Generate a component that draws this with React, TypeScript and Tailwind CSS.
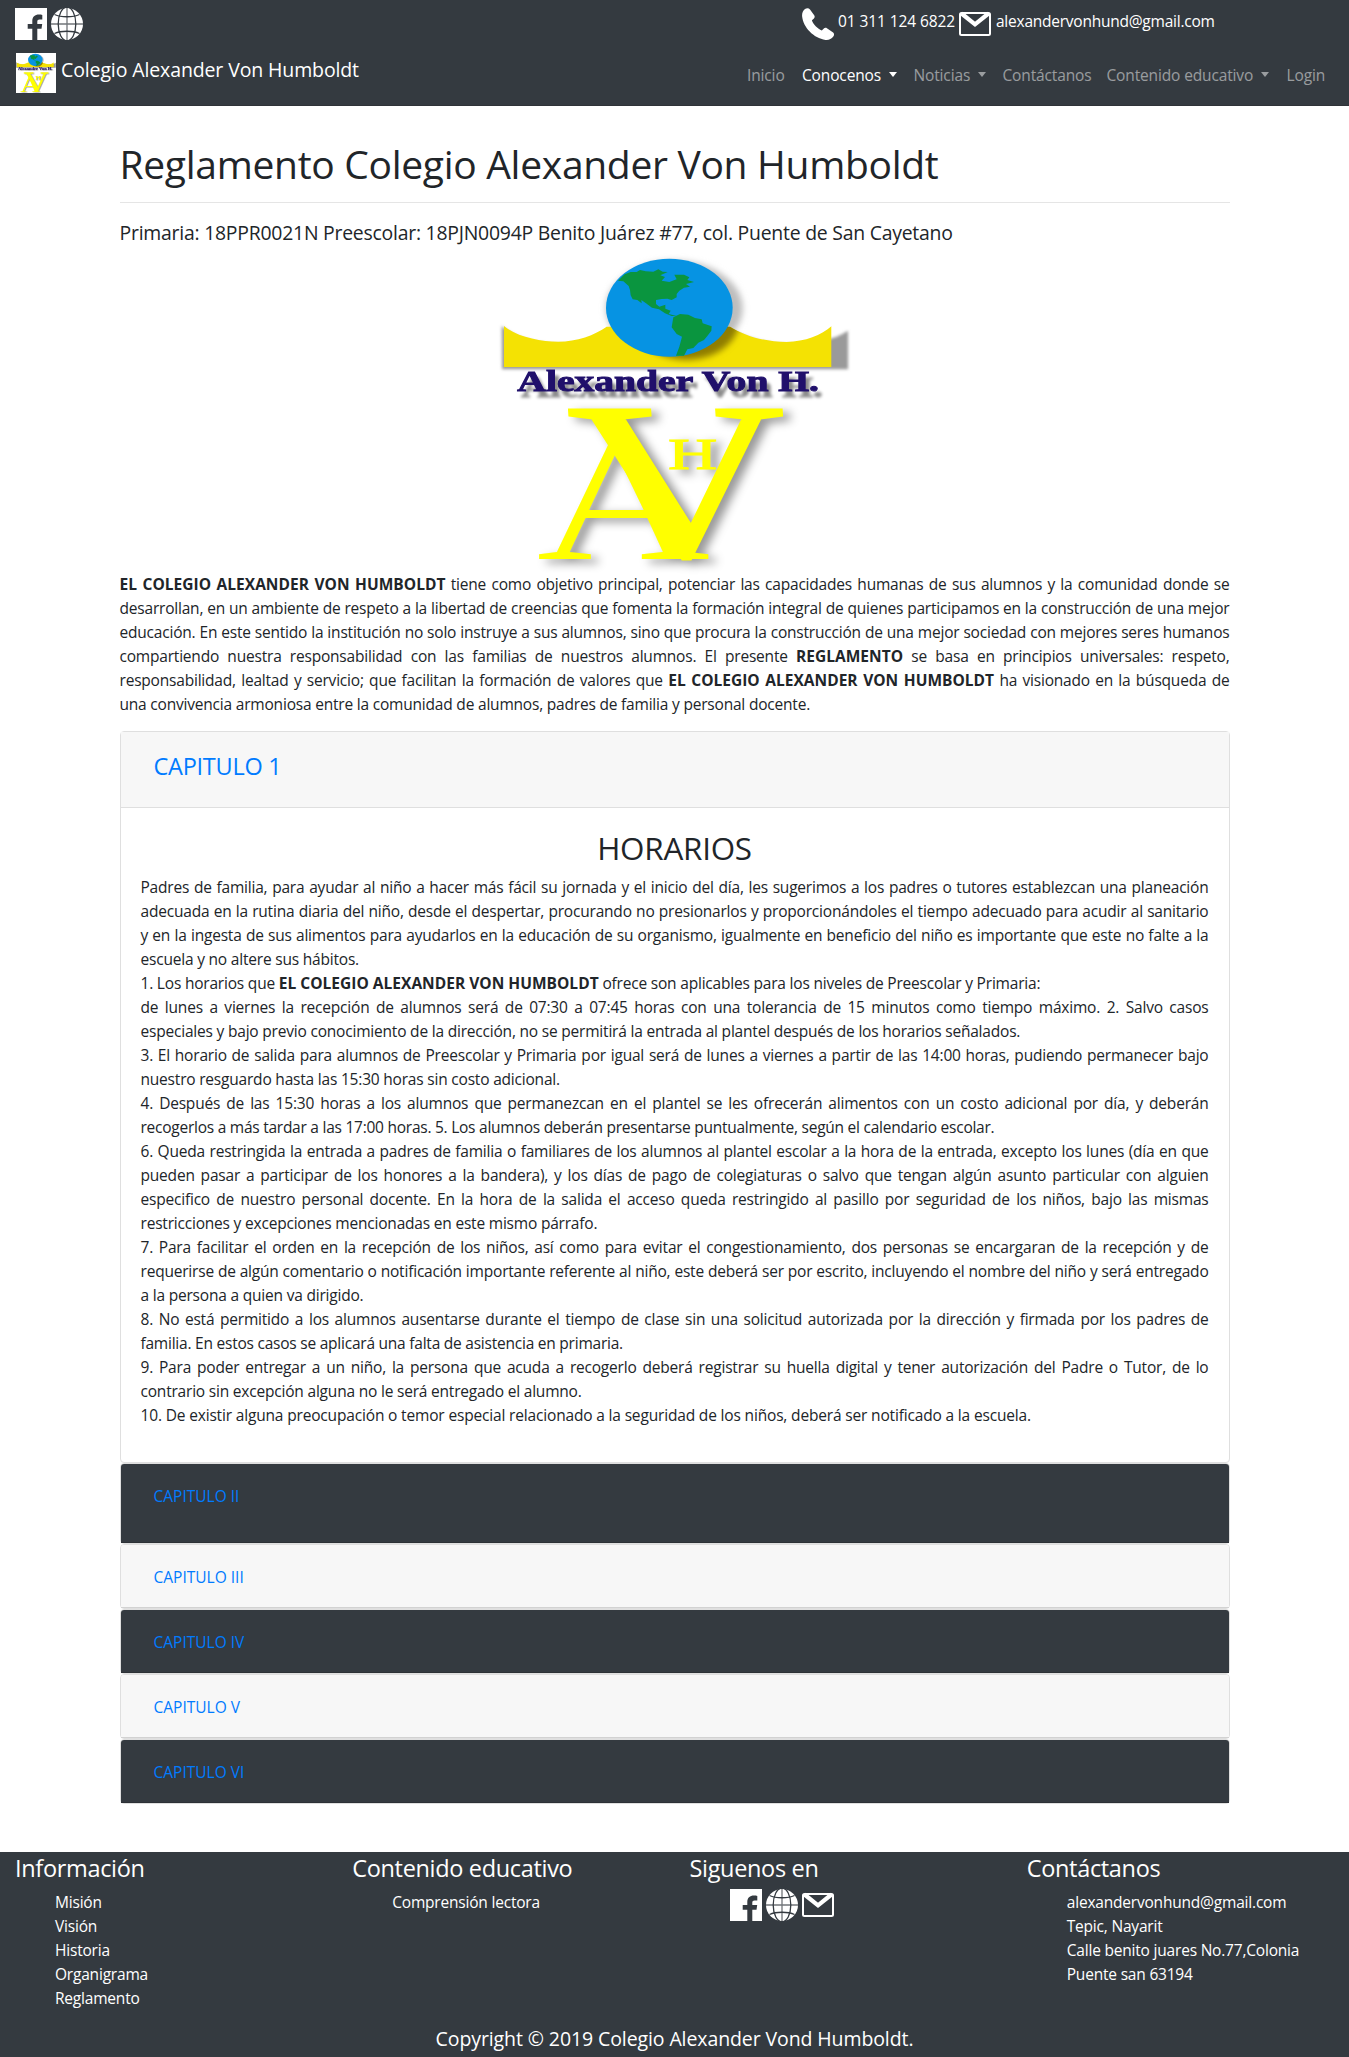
import type { ReactNode } from "react";

function FacebookIcon() {
  return (
    <svg viewBox="0 0 32 32" className="block h-8 w-8 shrink-0">
      <path
        fill="#fff"
        fillRule="evenodd"
        d="M0 0H32V32H22.3V20.7H26.5L27.2 16H22.3V13.6C22.3 12.1 23 11.4 24.6 11.4H27.3V6.9C26.4 6.7 25.2 6.6 24 6.6C19.8 6.6 17.3 8.8 17.3 13V16H12.7V20.7H17.3V32H0Z"
      />
    </svg>
  );
}

function GlobeIcon() {
  return (
    <svg viewBox="0 0 32 32" className="block h-8 w-8 shrink-0">
      <circle cx="16" cy="16" r="16" fill="#fff" />
      <g fill="none" stroke="#343a40" strokeWidth="1.3">
        <ellipse cx="16" cy="16" rx="8.8" ry="17" />
        <path d="M3.5 6.5C10 9.5 22 9.5 28.5 6.5M3.5 25.5C10 22.5 22 22.5 28.5 25.5" />
        <path d="M16 0V32M0 16H32" strokeOpacity=".7" />
      </g>
    </svg>
  );
}

function MailIcon() {
  return (
    <svg viewBox="0 0 32 32" className="block h-8 w-8 shrink-0" fill="none">
      <rect x="1" y="5" width="30" height="22" rx="1.5" stroke="#fff" strokeWidth="2" />
      <path d="M2.500 5.500L16 16.300L29.500 5.500" stroke="#fff" strokeWidth="4.2" />
    </svg>
  );
}

function PhoneIcon() {
  return (
    <svg viewBox="0 0 32 32" className="block h-8 w-8 shrink-0">
      <path
        fill="#fff"
        d="M3 1C4.8-.3 6.8-.1 8 1.4L12.2 7.2C13 8.5 12.8 9.7 11.7 10.7L9.9 12.3C10.9 16.2 15.8 21 19.8 22.5L21.6 20.7C22.5 19.7 23.8 19.5 24.9 20.2L30.8 24.2C32.3 25.3 32.4 27 31.3 28.5C29.5 31 26.8 32.2 23.6 31.9C11.5 30.3 1.2 19.4.1 8.300C-.1 5.300.9 2.500 3 1Z"
      />
    </svg>
  );
}

function Crest({ className, viewBox }: { className: string; viewBox: string }) {
  return (
    <svg viewBox={viewBox} preserveAspectRatio="none" className={className}>
      <defs>
        <filter id="soft" x="-20%" y="-20%" width="150%" height="150%">
          <feGaussianBlur stdDeviation="10" />
        </filter>
        <filter id="tight" x="-20%" y="-20%" width="150%" height="150%">
          <feGaussianBlur stdDeviation="4" />
        </filter>
        <clipPath id="band">
          <path d="M72 258C110 290 180 305 235 305C290 305 345 285 380 260H750C790 285 850 306 920 306C975 305 1025 285 1055 258V382H72Z" />
        </clipPath>
      </defs>
      <path
        d="M65 258C110 298 180 312 250 312C290 312 355 295 390 270H760C800 295 870 314 940 312C1010 309 1060 300 1104 272V388H66Z"
        fill="#9a9a9a"
        filter="url(#tight)"
      />
      <ellipse cx="583" cy="205" rx="205" ry="143" fill="#bdbdbd" filter="url(#soft)" />
      <g clipPath="url(#band)">
        <rect x="72" y="240" width="983" height="142" fill="#f4e203" />
        <ellipse cx="620" cy="235" rx="160" ry="125" fill="#8f7d00" filter="url(#soft)" />
      </g>
      <ellipse cx="568" cy="203" rx="190" ry="147" fill="#0693e3" />
      <g fill="#0a953f">
        <path d="M414 122L434 103L452 96L470 96L480 90L497 94L520 95L535 88L548 95L563 96L541 106L555 111L545 122L568 126L590 118L583 104L612 104L628 112L622 120L642 126L618 132L630 140L612 143L598 152L590 162L590 172L575 180L562 176L545 177L528 180L528 192L538 200L556 194L556 206L572 212L566 222L590 228L575 228L555 220L537 208L516 203L498 190L484 180L485 190L472 180L458 178L452 166L450 150L446 138L430 124Z" />
        <path d="M580 232L600 222L625 224L645 234L665 238L668 250L695 259L694 272L682 288L672 300L655 308L640 324L622 328L612 347L588 347L598 320L606 290L590 282L575 262Z" />
      </g>
      <g fontFamily="Liberation Serif" className="[filter:drop-shadow(12px_18px_4px_rgb(0_0_0/.45))]">
        <text x="112" y="453" fontWeight="700" fontSize="88" letterSpacing="0" textLength="905" lengthAdjust="spacingAndGlyphs" fill="#20106b" stroke="#20106b" strokeWidth="3">
          Alexander Von H.
        </text>
      </g>
      <g fontFamily="Liberation Serif" letterSpacing="0" fill="#ff0" className="[filter:drop-shadow(22px_12px_14px_rgb(0_0_0/.4))]">
        <g transform="translate(258 502) skewX(4)">
          <text x="0" y="446" fontSize="670" stroke="#ff0" strokeWidth="7" textLength="655" lengthAdjust="spacingAndGlyphs">V</text>
        </g>
        <text x="170" y="957" fontSize="540" textLength="520" lengthAdjust="spacingAndGlyphs">A</text>
        <text x="564" y="686" fontSize="132" stroke="#ff0" strokeWidth="3" textLength="148" lengthAdjust="spacingAndGlyphs">H</text>
      </g>
    </svg>
  );
}

function Caret() {
  return <span className="ml-[8px] inline-block border-x-[4.5px] border-t-[5px] border-x-transparent border-t-current align-[4px]" />;
}

const nav: { label: string; width: string; active?: boolean; caret?: boolean }[] = [
  { label: "Inicio", width: "w-[55px]" },
  { label: "Conocenos", width: "w-[111.5px]", active: true, caret: true },
  { label: "Noticias", width: "w-[89px]", caret: true },
  { label: "Contáctanos", width: "w-[104px]" },
  { label: "Contenido educativo", width: "w-[180px]", caret: true },
  { label: "Login", width: "w-[40px]" },
];

/** One typeset line; full lines are stretched to the column's width. */
function Line({ children, end }: { children: ReactNode; end?: boolean }) {
  return (
    <div
      className={
        end
          ? "h-6 whitespace-nowrap text-left"
          : "h-6 whitespace-nowrap text-justify [text-align-last:justify]"
      }
    >
      {children}
    </div>
  );
}

const B = ({ children }: { children: ReactNode }) => <b className="font-bold tracking-[0.02px]">{children}</b>;

const intro: [ReactNode, boolean?][] = [
  [<><B>EL COLEGIO ALEXANDER VON HUMBOLDT</B> tiene como objetivo principal, potenciar las capacidades humanas de sus alumnos y la comunidad donde se</>],
  ["desarrollan, en un ambiente de respeto a la libertad de creencias que fomenta la formación integral de quienes participamos en la construcción de una mejor"],
  ["educación. En este sentido la institución no solo instruye a sus alumnos, sino que procura la construcción de una mejor sociedad con mejores seres humanos"],
  [<>compartiendo nuestra responsabilidad con las familias de nuestros alumnos. El presente <B>REGLAMENTO</B> se basa en principios universales: respeto,</>],
  [<>responsabilidad, lealtad y servicio; que facilitan la formación de valores que <B>EL COLEGIO ALEXANDER VON HUMBOLDT</B> ha visionado en la búsqueda de</>],
  ["una convivencia armoniosa entre la comunidad de alumnos, padres de familia y personal docente.", true],
];

const horarios: [ReactNode, boolean?][] = [
  ["Padres de familia, para ayudar al niño a hacer más fácil su jornada y el inicio del día, les sugerimos a los padres o tutores establezcan una planeación"],
  ["adecuada en la rutina diaria del niño, desde el despertar, procurando no presionarlos y proporcionándoles el tiempo adecuado para acudir al sanitario"],
  ["y en la ingesta de sus alimentos para ayudarlos en la educación de su organismo, igualmente en beneficio del niño es importante que este no falte a la"],
  ["escuela y no altere sus hábitos.", true],
  [<>1. Los horarios que <B>EL COLEGIO ALEXANDER VON HUMBOLDT</B> ofrece son aplicables para los niveles de Preescolar y Primaria:</>, true],
  ["de lunes a viernes la recepción de alumnos será de 07:30 a 07:45 horas con una tolerancia de 15 minutos como tiempo máximo. 2. Salvo casos"],
  ["especiales y bajo previo conocimiento de la dirección, no se permitirá la entrada al plantel después de los horarios señalados.", true],
  ["3. El horario de salida para alumnos de Preescolar y Primaria por igual será de lunes a viernes a partir de las 14:00 horas, pudiendo permanecer bajo"],
  ["nuestro resguardo hasta las 15:30 horas sin costo adicional.", true],
  ["4. Después de las 15:30 horas a los alumnos que permanezcan en el plantel se les ofrecerán alimentos con un costo adicional por día, y deberán"],
  [<span className="tracking-[-0.25px]">recogerlos a más tardar a las 17:00 horas. 5. Los alumnos deberán presentarse puntualmente, según el calendario escolar.</span>, true],
  ["6. Queda restringida la entrada a padres de familia o familiares de los alumnos al plantel escolar a la hora de la entrada, excepto los lunes (día en que"],
  ["pueden pasar a participar de los honores a la bandera), y los días de pago de colegiaturas o salvo que tengan algún asunto particular con alguien"],
  ["especifico de nuestro personal docente. En la hora de la salida el acceso queda restringido al pasillo por seguridad de los niños, bajo las mismas"],
  ["restricciones y excepciones mencionadas en este mismo párrafo.", true],
  ["7. Para facilitar el orden en la recepción de los niños, así como para evitar el congestionamiento, dos personas se encargaran de la recepción y de"],
  ["requerirse de algún comentario o notificación importante referente al niño, este deberá ser por escrito, incluyendo el nombre del niño y será entregado"],
  ["a la persona a quien va dirigido.", true],
  ["8. No está permitido a los alumnos ausentarse durante el tiempo de clase sin una solicitud autorizada por la dirección y firmada por los padres de"],
  [<span className="tracking-[-0.23px]">familia. En estos casos se aplicará una falta de asistencia en primaria.</span>, true],
  ["9. Para poder entregar a un niño, la persona que acuda a recogerlo deberá registrar su huella digital y tener autorización del Padre o Tutor, de lo"],
  ["contrario sin excepción alguna no le será entregado el alumno.", true],
  [<span className="tracking-[-0.165px]">10. De existir alguna preocupación o temor especial relacionado a la seguridad de los niños, deberá ser notificado a la escuela.</span>, true],
];

const chapters = [
  { title: "CAPITULO II", card: "h-[81px]", header: "bg-[#343a40]" },
  { title: "CAPITULO III", card: "h-[65px]", header: "bg-[#f7f7f7]" },
  { title: "CAPITULO IV", card: "h-[65px]", header: "bg-[#343a40]" },
  { title: "CAPITULO V", card: "h-[65px]", header: "bg-[#f7f7f7]" },
  { title: "CAPITULO VI", card: "h-[65px]", header: "bg-[#343a40]" },
];

function FooterColumn({ title, children }: { title: string; children: ReactNode }) {
  return (
    <div className="px-[15px]">
      <h4 className="mt-[2px] mb-[7px] text-[23.5px] leading-[29px] tracking-[-0.33px]">{title}</h4>
      <ul className="pl-10 whitespace-nowrap">{children}</ul>
    </div>
  );
}

export default function App() {
  return (
    <div className="min-h-[2057px] overflow-hidden bg-white font-['Open_Sans',sans-serif] text-[15.5px] leading-6 tracking-[-0.2px] text-[#212529]">
      <header className="h-[106px] border-b border-[#2f3338] bg-[#343a40] text-white">
        <div className="flex h-12 pt-2 pl-[15px]">
          <div className="flex w-[787px] gap-1">
            <FacebookIcon />
            <GlobeIcon />
          </div>
          <div className="flex">
            <PhoneIcon />
            <span className="mt-px ml-1 w-[121px] tracking-[-0.1px]">01 311 124 6822</span>
            <MailIcon />
            <span className="mt-px ml-[5px] tracking-[-0.24px]">alexandervonhund@gmail.com</span>
          </div>
        </div>
        <nav className="flex pl-4">
          <Crest viewBox="60 40 1050 950" className="mt-[5px] block h-10 w-10 shrink-0 overflow-visible bg-white" />
          <a className="mt-[7px] ml-[5px] w-[686px] text-[19.5px] leading-[30px] tracking-[-0.12px]">
            Colegio Alexander Von Humboldt
          </a>
          <ul className="mt-[15px] flex whitespace-nowrap">
            {nav.map((n) => (
              <li key={n.label} className={`${n.width} tracking-[-0.14px] ${n.active ? "text-white" : "text-white/50"}`}>
                {n.label}
                {n.caret && <Caret />}
              </li>
            ))}
          </ul>
        </nav>
      </header>

      <main className="mx-auto w-[1110px] pt-[34px]">
        <h1 className="text-[39px] leading-[48px] tracking-[-0.3px] whitespace-nowrap">
          Reglamento Colegio Alexander Von Humboldt
        </h1>
        <hr className="mt-[14px] mb-[18px] border-t border-[#e5e5e5]" />
        <h5 className="h-6 text-[19.4px] leading-6 tracking-[-0.23px] whitespace-nowrap">
          Primaria: 18PPR0021N Preescolar: 18PJN0094P Benito Juárez #77, col. Puente de San Cayetano
        </h5>
        <Crest viewBox="0 33 1170 960" className="mx-auto mt-[6px] block h-[320px] w-[390px] overflow-visible" />
        <div className="mt-[1px] mb-[15px]">
          {intro.map(([t, end], i) => (
            <Line key={i} end={end}>{t}</Line>
          ))}
        </div>

        <section className="h-[732px] rounded-sm border border-[#dfdfdf]">
          <div className="h-[76px] border-b border-[#dfdfdf] bg-[#f7f7f7] px-[33px] pt-[20px] text-[23.5px] leading-[29px] tracking-[-0.25px] text-[#007bff]">
            CAPITULO 1
          </div>
          <div className="px-5 pt-[21px]">
            <h2 className="h-[46px] text-center text-[31.4px] leading-[38px] tracking-[-0.25px]">HORARIOS</h2>
            {horarios.map(([t, end], i) => (
              <Line key={i} end={end}>{t}</Line>
            ))}
          </div>
        </section>
        {chapters.map((c) => (
          <section key={c.title} className={`${c.card} rounded-sm border border-[#dfdfdf]`}>
            <div className={`${c.header} h-full rounded-t-[3px] border-b border-black/15 px-[33px] pt-5 tracking-normal text-[#007bff]`}>
              {c.title}
            </div>
          </section>
        ))}
      </main>

      <footer className="mt-12 h-[206px] bg-[#343a40] text-white">
        <div className="grid h-[172px] grid-cols-4">
          <FooterColumn title="Información">
            <li>Misión</li>
            <li>Visión</li>
            <li>Historia</li>
            <li>Organigrama</li>
            <li>Reglamento</li>
          </FooterColumn>
          <FooterColumn title="Contenido educativo">
            <li>Comprensión lectora</li>
          </FooterColumn>
          <FooterColumn title="Siguenos en">
            <li className="-mt-px flex gap-1">
              <FacebookIcon />
              <GlobeIcon />
              <MailIcon />
            </li>
          </FooterColumn>
          <FooterColumn title="Contáctanos">
            <li>alexandervonhund@gmail.com</li>
            <li>Tepic, Nayarit</li>
            <li>Calle benito juares No.77,Colonia</li>
            <li>Puente san 63194</li>
          </FooterColumn>
        </div>
        <p className="text-center text-[19.5px] leading-[30px] tracking-[-0.1px]">
          Copyright © 2019 Colegio Alexander Vond Humboldt.
        </p>
      </footer>
    </div>
  );
}
